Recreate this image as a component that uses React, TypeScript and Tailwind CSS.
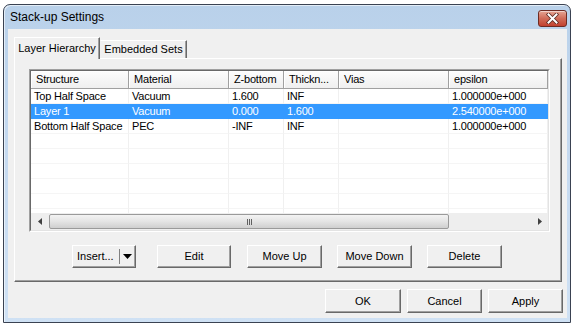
import React from 'react';

const columns = [
  { label: 'Structure', w: 'w-[98px]' },
  { label: 'Material', w: 'w-[100px]' },
  { label: 'Z-bottom', w: 'w-[55px]' },
  { label: 'Thickn...', w: 'w-[55px]' },
  { label: 'Vias', w: 'w-[110px]' },
  { label: 'epsilon', w: 'w-[99px]' },
];

const rows = [
  ['Top Half Space', 'Vacuum', '1.600', 'INF', '', '1.000000e+000'],
  ['Layer 1', 'Vacuum', '0.000', '1.600', '', '2.540000e+000'],
  ['Bottom Half Space', 'PEC', '-INF', 'INF', '', '1.000000e+000'],
  ['', '', '', '', '', ''],
  ['', '', '', '', '', ''],
  ['', '', '', '', '', ''],
  ['', '', '', '', '', ''],
  ['', '', '', '', '', ''],
  ['', '', '', '', '', ''],
];

function Btn({ label, w, className = '' }: { label: string; w: string; className?: string }) {
  return (
    <button
      className={`${w} h-[23px] flex items-center justify-center bg-[#f0f0f0] border border-t-white border-l-white border-r-[#696969] border-b-[#696969] shadow-[inset_-1px_-1px_0_#a0a0a0] text-[11px] text-black ${className}`}
    >
      {label}
    </button>
  );
}

function CloseButton() {
  return (
    <div className="w-[29px] h-[17px] rounded-[3px] border border-[#6e2b22] bg-gradient-to-b from-[#e5a594] via-[#d06b58] to-[#c2402f] shadow-[inset_0_1px_0_rgba(255,255,255,0.5)] flex items-center justify-center">
      <svg width="13" height="11" viewBox="0 0 13 11">
        <path d="M2.5 1.5 L10.5 9.5 M10.5 1.5 L2.5 9.5" stroke="#5a2a22" strokeWidth="3.6" strokeLinecap="square" />
        <path d="M2.5 1.5 L10.5 9.5 M10.5 1.5 L2.5 9.5" stroke="#ffffff" strokeWidth="2" strokeLinecap="square" />
      </svg>
    </div>
  );
}

function ListView() {
  return (
    <div className="ml-[14px] mt-[10px] w-[521px] h-[163px] border border-t-[#a0a0a0] border-l-[#a0a0a0] border-r-white border-b-white">
      <div className="w-full h-full border border-t-[#696969] border-l-[#696969] border-r-[#e3e3e3] border-b-[#e3e3e3] bg-white flex flex-col overflow-hidden">
        {/* header */}
        <div className="flex h-[18px] shrink-0">
          {columns.map((c) => (
            <div
              key={c.label}
              className={`${c.w} shrink-0 h-full bg-gradient-to-b from-[#fdfdfd] to-[#efefef] border-r border-b border-r-[#a0a0a0] border-b-[#a0a0a0] shadow-[inset_1px_1px_0_#ffffff] pl-[5px] flex items-center text-[11px] tracking-[-0.2px] text-black whitespace-nowrap overflow-hidden`}
            >
              {c.label}
            </div>
          ))}
        </div>
        {/* rows */}
        <div className="flex-1 overflow-hidden">
          {rows.map((r, i) => {
            const sel = i === 1;
            return (
              <div key={i} className={`flex h-[15px] ${sel ? 'bg-[#3399ff] text-white' : 'text-black'}`}>
                {r.map((cell, j) => (
                  <div
                    key={j}
                    className={`${columns[j].w} shrink-0 h-full border-r border-b ${sel ? 'border-r-[#3399ff] border-b-[#3399ff]' : 'border-r-[#f0f0f0] border-b-[#f5f5f5]'} pl-[3px] flex items-center text-[11px] tracking-[-0.2px] whitespace-nowrap overflow-hidden`}
                  >
                    {cell}
                  </div>
                ))}
              </div>
            );
          })}
        </div>
        {/* horizontal scrollbar */}
        <div className="h-[17px] shrink-0 flex items-center bg-[#eeeeee]">
          <div className="w-[17px] h-full flex items-center justify-center">
            <svg width="4" height="7" viewBox="0 0 4 7">
              <path d="M4 0 L0 3.5 L4 7 Z" fill="#404040" />
            </svg>
          </div>
          <div className="ml-[1px] w-[400px] h-[15px] rounded-[2px] border border-[#9a9a9a] bg-gradient-to-b from-[#f3f3f3] via-[#e4e4e4] to-[#cfcfcf] flex items-center justify-center">
            <div className="flex gap-[1px]">
              <div className="w-[1px] h-[6px] bg-[#606060]" />
              <div className="w-[1px] h-[6px] bg-[#606060]" />
              <div className="w-[1px] h-[6px] bg-[#606060]" />
            </div>
          </div>
          <div className="flex-1" />
          <div className="w-[17px] h-full flex items-center justify-center">
            <svg width="4" height="7" viewBox="0 0 4 7">
              <path d="M0 0 L4 3.5 L0 7 Z" fill="#404040" />
            </svg>
          </div>
        </div>
      </div>
    </div>
  );
}

export default function App() {
  return (
    <div className="w-[576px] h-[327px] bg-white pl-[3px] pt-[4px] overflow-hidden" style={{ fontFamily: '"Liberation Sans", Arial, sans-serif' }}>
      <div className="w-[568px] h-[319px] border border-[#3a4252] rounded-t-[7px] bg-gradient-to-b from-[#b9d1ea] via-[#c6daf0] to-[#cfe1f4] flex flex-col shadow-[inset_1px_1px_0_rgba(255,255,255,0.6)]">
        {/* title bar */}
        <div className="h-[24px] shrink-0 flex items-center pl-[6px] pr-[3px]">
          <span className="text-[12px] text-black">Stack-up Settings</span>
          <div className="flex-1" />
          <div className="mt-[2px]">
            <CloseButton />
          </div>
        </div>
        {/* client */}
        <div className="ml-[4px] w-[559px] h-[289px] bg-[#f0f0f0] flex flex-col">
          {/* tabs */}
          <div className="ml-[6px] mt-[8px] flex items-end h-[21px]">
            <div className="relative z-10 -mb-px w-[86px] h-[22px] bg-[#f0f0f0] border border-b-0 border-t-white border-l-white border-r-[#696969] shadow-[inset_-1px_0_0_#a0a0a0] flex items-center justify-center text-[11px] text-black">
              Layer Hierarchy
            </div>
            <div className="w-[87px] h-[18px] bg-[#f0f0f0] border border-b-0 border-t-white border-l-[#f0f0f0] border-r-[#696969] shadow-[inset_-1px_0_0_#a0a0a0] flex items-center justify-center text-[11px] text-black">
              Embedded Sets
            </div>
          </div>
          {/* panel */}
          <div className="ml-[6px] w-[548px] h-[224px] border border-t-white border-l-white border-r-[#696969] border-b-[#696969] shadow-[inset_-1px_-1px_0_#a0a0a0] flex flex-col">
            <ListView />
            <div className="mt-[13px] flex items-center">
              <div className="ml-[57px] w-[64px] h-[23px] flex items-center bg-[#f0f0f0] border border-t-white border-l-white border-r-[#696969] border-b-[#696969] shadow-[inset_-1px_-1px_0_#a0a0a0] text-[11px] text-black">
                <span className="pl-[4px] w-[46px]">Insert...</span>
                <div className="w-[1px] h-[15px] bg-[#808080]" />
                <div className="flex-1 flex items-center justify-center">
                  <svg width="9" height="5" viewBox="0 0 9 5">
                    <path d="M0 0 L9 0 L4.5 5 Z" fill="#000" />
                  </svg>
                </div>
              </div>
              <Btn label="Edit" w="w-[74px]" className="ml-[21px]" />
              <Btn label="Move Up" w="w-[75px]" className="ml-[16px]" />
              <Btn label="Move Down" w="w-[75px]" className="ml-[15px]" />
              <Btn label="Delete" w="w-[75px]" className="ml-[15px]" />
            </div>
          </div>
          {/* dialog buttons */}
          <div className="mt-[7px] flex justify-end pr-[4px] gap-[6px]">
            <Btn label="OK" w="w-[76px]" className="h-[24px]" />
            <Btn label="Cancel" w="w-[75px]" className="h-[24px]" />
            <Btn label="Apply" w="w-[75px]" className="h-[24px]" />
          </div>
        </div>
      </div>
    </div>
  );
}
